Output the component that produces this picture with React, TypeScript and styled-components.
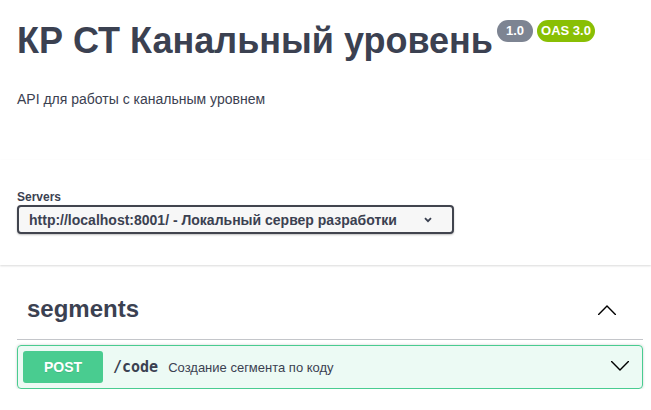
import styled, { createGlobalStyle } from "styled-components";

const GlobalStyle = createGlobalStyle`
  body {
    margin: 0;
    background: #fff;
    font-family: "Liberation Sans", Arial, sans-serif;
    color: #3b4151;
  }
`;

const Info = styled.div`
  padding: 20px 8px 0 17px;
  margin-bottom: 51px;
`;

const TitleRow = styled.div`
  display: flex;
  align-items: flex-start;
  gap: 4px;
`;

const Title = styled.h2`
  margin: 0;
  font-size: 36px;
  font-weight: 700;
  line-height: 42px;
  color: #3b4151;
`;

const Badge = styled.span<{ $bg: string; $pad: number }>`
  display: inline-block;
  background: ${(p) => p.$bg};
  color: #fff;
  font-size: 13px;
  font-weight: 700;
  line-height: 18px;
  padding: 2px ${(p) => p.$pad}px;
  border-radius: 57px;
`;

const Description = styled.p`
  margin: 27px 0 0;
  font-size: 14px;
  line-height: 20px;
`;

const SchemeContainer = styled.section`
  padding: 30px 8px 31px 17px;
  background: #fff;
  box-shadow: 0 1px 2px 0 rgba(0, 0, 0, 0.15);
  margin-bottom: 20px;
`;

const ServersLabel = styled.span`
  display: block;
  font-size: 12px;
  font-weight: 700;
  line-height: 14px;
  margin-bottom: 1px;
`;

const SelectBox = styled.div`
  box-sizing: border-box;
  width: 437px;
  height: 29px;
  display: flex;
  align-items: center;
  justify-content: space-between;
  padding: 0 20px 0 10px;
  border: 2px solid #41444e;
  border-radius: 4px;
  background: #f7f7f7;
  box-shadow: 0 1px 2px 0 rgba(0, 0, 0, 0.25);
  font-size: 14px;
  font-weight: 700;
  color: #3b4151;
`;

const Wrapper = styled.div`
  padding: 0 8px 0 17px;
`;

const Tag = styled.div`
  display: flex;
  align-items: flex-start;
  justify-content: space-between;
  padding: 10px 24px 16px 10px;
  border-bottom: 1px solid rgba(59, 65, 81, 0.3);
  margin-bottom: 5px;
`;

const TagTitle = styled.h3`
  margin: 0;
  font-size: 24px;
  font-weight: 700;
  line-height: 28px;
  color: #3b4151;
`;

const ArrowButton = styled.button`
  border: none;
  background: none;
  padding: 0;
  margin-top: ${(p: { $top?: number }) => p.$top ?? 0}px;
  display: flex;
  cursor: pointer;
  color: #000;
`;

const OpBlock = styled.div`
  border: 1px solid #49cc90;
  border-radius: 4px;
  background: rgba(73, 204, 144, 0.1);
  box-shadow: 0 0 3px rgba(0, 0, 0, 0.19);
`;

const Summary = styled.div`
  display: flex;
  align-items: center;
  padding: 5px 10px 5px 5px;
`;

const Method = styled.span`
  min-width: 80px;
  padding: 6px 0;
  line-height: 20px;
  text-align: center;
  background: #49cc90;
  border-radius: 3px;
  color: #fff;
  font-size: 14px;
  font-weight: 700;
  text-shadow: 0 1px 0 rgba(0, 0, 0, 0.1);
`;

const Path = styled.span`
  padding: 0 10px;
  font-family: "DejaVu Sans Mono", "Liberation Mono", monospace;
  font-size: 15px;
  font-weight: 700;
  color: #3b4151;
`;

const OpDescription = styled.span`
  flex: 1;
  font-size: 13px;
  color: #3b4151;
`;

const Chevron = ({ up }: { up?: boolean }) => (
  <svg width="24" height="24" viewBox="0 0 20 20" fill="currentColor">
    <path
      transform={up ? undefined : "rotate(180 10 10)"}
      d="M17.418 14.908c-.228.23-.6.23-.83 0L10 8.32l-6.588 6.588c-.23.23-.6.23-.83 0s-.23-.6 0-.83l7.003-7.003c.23-.23.6-.23.83 0l7.003 7.003c.23.23.23.6 0 .83z"
    />
  </svg>
);

const SmallChevron = () => (
  <svg width="8" height="6" viewBox="0 0 8 6">
    <path d="M1 1.2 L4 4.2 L7 1.2" fill="none" stroke="#3b4151" strokeWidth="1.8" />
  </svg>
);

export default function App() {
  return (
    <>
      <GlobalStyle />
      <Info>
        <TitleRow>
          <Title>КР СТ Канальный уровень</Title>
          <Badge $bg="#7d8492" $pad={9}>1.0</Badge>
          <Badge $bg="#89bf04" $pad={4}>OAS 3.0</Badge>
        </TitleRow>
        <Description>API для работы с канальным уровнем</Description>
      </Info>

      <SchemeContainer>
        <ServersLabel>Servers</ServersLabel>
        <SelectBox>
          <span>http://localhost:8001/ - Локальный сервер разработки</span>
          <SmallChevron />
        </SelectBox>
      </SchemeContainer>

      <Wrapper>
        <Tag>
          <TagTitle>segments</TagTitle>
          <ArrowButton $top={2}>
            <Chevron up />
          </ArrowButton>
        </Tag>
        <OpBlock>
          <Summary>
            <Method>POST</Method>
            <Path>/code</Path>
            <OpDescription>Создание сегмента по коду</OpDescription>
            <ArrowButton>
              <Chevron />
            </ArrowButton>
          </Summary>
        </OpBlock>
      </Wrapper>
    </>
  );
}
